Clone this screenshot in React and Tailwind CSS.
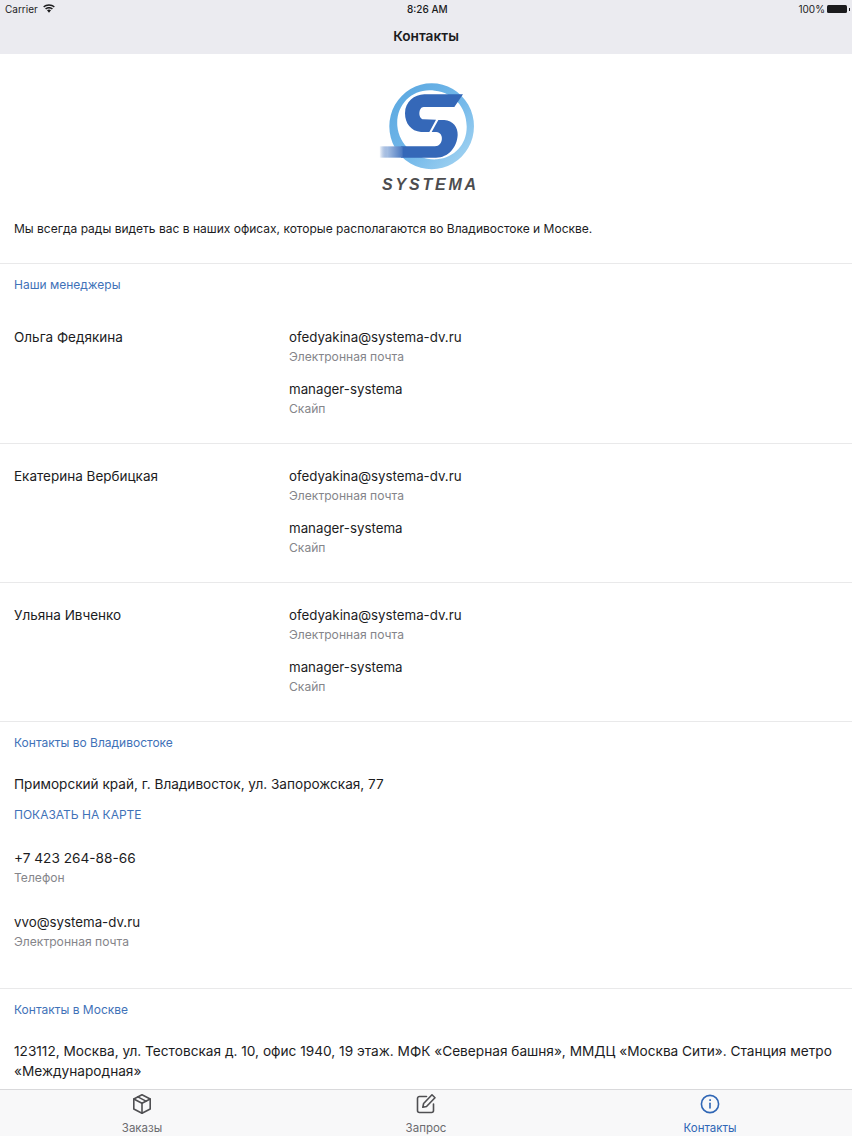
const font = { fontFamily: '"Inter", "Liberation Sans", sans-serif' };

function Logo() {
  return (
    <div className="relative w-[130px] h-[130px]">
      <svg width="130" height="130" viewBox="0 0 390 390" className="block">
        <defs>
          <linearGradient id="bar" x1="55" x2="135" y1="0" y2="0" gradientUnits="userSpaceOnUse">
            <stop offset="0" stopColor="#3a6cb8" stopOpacity="0" />
            <stop offset="0.3" stopColor="#a5bee2" />
            <stop offset="1" stopColor="#3568b8" />
          </linearGradient>
          <linearGradient id="ring" x1="90" y1="60" x2="330" y2="290" gradientUnits="userSpaceOnUse">
            <stop offset="0" stopColor="#5aa7e0" />
            <stop offset="0.55" stopColor="#74b9ea" />
            <stop offset="1" stopColor="#a8d6f2" />
          </linearGradient>
        </defs>
        <path
          fillRule="evenodd"
          fill="url(#ring)"
          d="M212 40 A127 129 0 1 1 211.9 40 Z M222 62 C155 52 104 104 109 168 C114 226 168 272 228 268 C282 264 319 220 317 168 C316 110 277 68 222 62 Z"
        />
        <path
          fill="#3568b8"
          d="M190 73 L306 73 L280 111 L188 111 C172 111 170 147 188 148 L225 149 L205 186 L180 186 C150 184 132 160 132 130 C132 95 160 74 190 73 Z"
        />
        <path
          fill="#3568b8"
          d="M232 150 L250 150 C276 152 291 172 290 195 C288 232 262 263 225 263 L120 263 L120 229 L222 229 C248 228 250 187 226 186 L212 186 Z"
        />
        <path fill="url(#bar)" d="M55 229 L125 229 L125 263 L55 263 Z" />
      </svg>
      <div
        className="absolute left-[21px] top-[105px] text-[16px] leading-[20px] font-bold italic tracking-[2.8px] text-[#4d4d4f] whitespace-nowrap"
        style={{ fontFamily: '"Liberation Sans", sans-serif' }}
      >
        SYSTEMA
      </div>
    </div>
  );
}

function Field({ value, label, valueClass = 'text-[13.3px]' }) {
  return (
    <div>
      <div className={`${valueClass} leading-[20px] text-[#1c1c1e]`}>{value}</div>
      <div className="text-[12.1px] leading-[20px] text-[#85858a]">{label}</div>
    </div>
  );
}

function Manager({ name }) {
  return (
    <div className="h-[139px] border-b border-[#e9e9ea] px-[14px] pt-[22px] flex">
      <div className="w-[275px] text-[13.5px] leading-[20px] text-[#1c1c1e]">{name}</div>
      <div>
        <Field value="ofedyakina@systema-dv.ru" label="Электронная почта" />
        <div className="h-[12px]" />
        <Field value="manager-systema" label="Скайп" />
      </div>
    </div>
  );
}

function SectionTitle({ children }) {
  return <div className="text-[12px] leading-[20px] text-[#3f72b8]">{children}</div>;
}

function PackageIcon() {
  return (
    <svg width="22" height="22" viewBox="0 0 22 22" fill="none" stroke="#4f4f52" strokeWidth="1.6" strokeLinejoin="round" strokeLinecap="round">
      <path d="M11 1.8 L19.2 6 V16 L11 20.2 L2.8 16 V6 Z" />
      <path d="M2.8 6 L11 10.2 L19.2 6" />
      <path d="M11 10.2 V20.2" />
      <path d="M6.8 3.9 L15 8.1" />
    </svg>
  );
}

function EditIcon() {
  return (
    <svg width="22" height="22" viewBox="0 0 22 22" fill="none" stroke="#4f4f52" strokeWidth="1.6" strokeLinejoin="round" strokeLinecap="round">
      <path d="M11.5 3.5 H4.5 A2 2 0 0 0 2.5 5.5 V17.5 A2 2 0 0 0 4.5 19.5 H16.5 A2 2 0 0 0 18.5 17.5 V11" />
      <path d="M17 1.8 L20 4.8 L11.5 13.5 L7.8 14.3 L8.6 10.5 Z" />
    </svg>
  );
}

function InfoIcon() {
  return (
    <svg width="20" height="20" viewBox="0 0 20 20" fill="none" stroke="#2f66b5" strokeWidth="1.6" strokeLinecap="round">
      <circle cx="10" cy="10" r="8.6" />
      <path d="M10 9.2 V14" />
      <circle cx="10" cy="6.1" r="0.5" fill="#2f66b5" strokeWidth="0.9" />
    </svg>
  );
}

function Tab({ icon, label, active }) {
  return (
    <div className="w-[284px] flex flex-col items-center">
      <div className="h-[24px] flex items-center justify-center">{icon}</div>
      <div className={`text-[11.5px] leading-[14px] mt-[5px] ${active ? 'text-[#2f66b5]' : 'text-[#6b6b6f]'}`}>{label}</div>
    </div>
  );
}

export default function App() {
  return (
    <div className="w-[852px] h-[1136px] bg-white flex flex-col overflow-hidden" style={font}>
      <header className="h-[54px] shrink-0 bg-[#ebebf0]">
        <div className="relative h-[18px] flex items-center justify-between pl-[5px] pr-[2px] text-[10px] leading-[18px] text-[#1b1b1d]">
          <div className="flex items-center gap-[5px]">
            <span>Carrier</span>
            <svg width="12" height="9" viewBox="0 0 12 9" fill="#1b1b1d" className="-mt-[2px]">
              <path d="M6 0.2 C8.2 0.2 10.2 1 11.8 2.4 L10.8 3.6 C9.5 2.4 7.8 1.7 6 1.7 C4.2 1.7 2.5 2.4 1.2 3.6 L0.2 2.4 C1.8 1 3.8 0.2 6 0.2 Z" />
              <path d="M6 3 C7.5 3 8.8 3.5 9.9 4.5 L8.9 5.6 C8.1 4.9 7.1 4.5 6 4.5 C4.9 4.5 3.9 4.9 3.1 5.6 L2.1 4.5 C3.2 3.5 4.5 3 6 3 Z" />
              <path d="M6 5.6 C6.8 5.6 7.4 5.8 8 6.3 L6 8.8 L4 6.3 C4.6 5.8 5.2 5.6 6 5.6 Z" />
            </svg>
          </div>
          <span className="absolute left-[407px] top-0 font-medium">8:26 AM</span>
          <div className="flex items-center gap-[2px]">
            <span>100%</span>
            <div className="w-[20px] h-[8px] rounded-[1.5px] bg-[#1b1b1d]" />
            <div className="w-[1px] h-[3px] bg-[#1b1b1d]" />
          </div>
        </div>
        <div className="h-[36px] flex items-center justify-center text-[13.7px] font-semibold text-[#1b1b1d]">Контакты</div>
      </header>

      <main className="flex-1 min-h-0 overflow-hidden">
        <div className="h-[210px] border-b border-[#e9e9ea]">
          <div className="flex justify-center pt-[16px]">
            <Logo />
          </div>
          <div className="px-[14px] mt-[19px] text-[12.02px] leading-[20px] text-[#1c1c1e]">
            Мы всегда рады видеть вас в наших офисах, которые располагаются во Владивостоке и Москве.
          </div>
        </div>

        <div className="px-[14px] pt-[11px] h-[41px]">
          <SectionTitle>Наши менеджеры</SectionTitle>
        </div>
        <Manager name="Ольга Федякина" />
        <Manager name="Екатерина Вербицкая" />
        <Manager name="Ульяна Ивченко" />

        <div className="h-[267px] border-b border-[#e9e9ea] px-[14px] pt-[11px]">
          <SectionTitle>Контакты во Владивостоке</SectionTitle>
          <div className="mt-[21px] text-[13.6px] leading-[20px] text-[#1c1c1e]">Приморский край, г. Владивосток, ул. Запорожская, 77</div>
          <div className="mt-[11px] text-[12px] leading-[20px] text-[#3f72b8]">ПОКАЗАТЬ НА КАРТЕ</div>
          <div className="mt-[23px]"><Field value="+7 423 264-88-66" label="Телефон" valueClass="text-[13.65px]" /></div>
          <div className="mt-[24px]"><Field value="vvo@systema-dv.ru" label="Электронная почта" /></div>
        </div>

        <div className="px-[14px] pt-[11px]">
          <SectionTitle>Контакты в Москве</SectionTitle>
          <div className="mt-[21px] text-[13.67px] leading-[20px] text-[#1c1c1e]">
            123112, Москва, ул. Тестовская д. 10, офис 1940, 19 этаж. МФК «Северная башня», ММДЦ «Москва Сити». Станция метро «Международная»
          </div>
        </div>
      </main>

      <nav className="h-[47px] shrink-0 bg-[#f8f8f9] border-t border-[#d9d9db] flex pt-[2px]">
        <Tab icon={<PackageIcon />} label="Заказы" />
        <Tab icon={<EditIcon />} label="Запрос" />
        <Tab icon={<InfoIcon />} label="Контакты" active />
      </nav>
    </div>
  );
}
